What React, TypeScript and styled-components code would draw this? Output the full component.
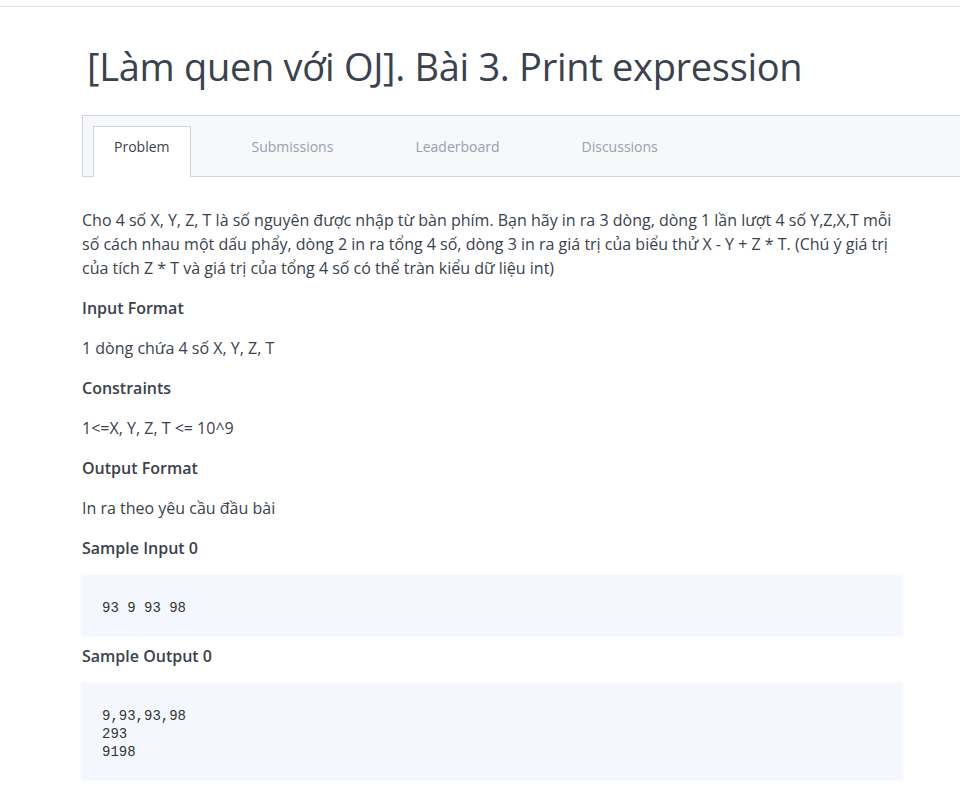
import React from 'react';
import styled, { createGlobalStyle } from 'styled-components';

const CONTENT_LEFT = 82;
const CONTENT_WIDTH = 820;
const TEXT_COLOR = '#39424e';

const GlobalStyle = createGlobalStyle`
	html, body {
		margin: 0;
		padding: 0;
		background: #fff;
	}
	body {
		font-family: 'Open Sans', 'Noto Sans', sans-serif;
		color: ${TEXT_COLOR};
		overflow-x: hidden;
	}
`;

const Page = styled.div`
	min-height: 798px;
	overflow: hidden;
`;

const TopRule = styled.div`
	height: 6px;
	border-bottom: 1px solid #e3e3e3;
`;

const Content = styled.main`
	margin-left: ${CONTENT_LEFT}px;
	width: ${CONTENT_WIDTH}px;
`;

const Title = styled.h1`
	margin: 39px 0 29px 5px;
	font-size: 38px;
	line-height: 40px;
	font-weight: 400;
	letter-spacing: -0.3px;
	color: ${TEXT_COLOR};
	white-space: nowrap;
`;

/**
 * Tab strip runs past the right edge of the window
 */
const TabBar = styled.nav`
	display: flex;
	align-items: flex-end;
	gap: 40px;
	width: 920px;
	height: 50px;
	padding: 10px 0 0 10px;
	background: #f7f8fa;
	border: 1px solid #cfd2d6;
`;

const Tab = styled.div<{ $active?: boolean }>`
	box-sizing: border-box;
	height: 51px;
	margin-bottom: -1px;
	padding: 10px 20px 0;
	font-size: 14px;
	line-height: 20px;
	color: ${p => (p.$active ? TEXT_COLOR : '#979faf')};
	background: ${p => (p.$active ? '#fff' : 'transparent')};
	border: 1px solid ${p => (p.$active ? '#cfd2d6' : 'transparent')};
	border-bottom: none;
`;

const Body = styled.section`
	margin-top: 31px;
	font-size: 16px;
	line-height: 24px;

	> p {
		margin: 0 0 16px;
	}
`;

const SectionHeading = styled.h3`
	margin: 0 0 16px;
	font-size: 16px;
	line-height: 24px;
	font-weight: 600;
	color: ${TEXT_COLOR};
`;

const CodeBlock = styled.pre`
	margin: 0 0 9px;
	padding: 23px 20px 18px;
	background: #f4f8fe;
	box-shadow: 0 0 3px rgba(225, 232, 245, 0.9);
	font-family: 'Liberation Mono', 'DejaVu Sans Mono', monospace;
	font-size: 14px;
	line-height: 18px;
	color: #333;
`;

const tabs = ['Problem', 'Submissions', 'Leaderboard', 'Discussions'];

export default function App() {
	return (
		<Page>
			<GlobalStyle />
			<TopRule />
			<Content>
				<Title>[Làm quen với OJ]. Bài 3. Print expression</Title>
				<TabBar>
					{tabs.map((t, i) => (
						<Tab key={t} $active={i === 0}>
							{t}
						</Tab>
					))}
				</TabBar>
				<Body>
					<p>
						Cho 4 số X, Y, Z, T là số nguyên được nhập từ bàn phím. Bạn hãy in ra 3 dòng, dòng 1 lần
						lượt 4 số Y,Z,X,T mỗi số cách nhau một dấu phẩy, dòng 2 in ra tổng 4 số, dòng 3 in ra giá
						trị của biểu thử X - Y + Z * T. (Chú ý giá trị của tích Z * T và giá trị của tổng 4 số có
						thể tràn kiểu dữ liệu int)
					</p>
					<SectionHeading>Input Format</SectionHeading>
					<p>1 dòng chứa 4 số X, Y, Z, T</p>
					<SectionHeading>Constraints</SectionHeading>
					<p>1&lt;=X, Y, Z, T &lt;= 10^9</p>
					<SectionHeading>Output Format</SectionHeading>
					<p>In ra theo yêu cầu đầu bài</p>
					<SectionHeading>Sample Input 0</SectionHeading>
					<CodeBlock>93 9 93 98</CodeBlock>
					<SectionHeading>Sample Output 0</SectionHeading>
					<CodeBlock>{'9,93,93,98\n293\n9198'}</CodeBlock>
				</Body>
			</Content>
		</Page>
	);
}
